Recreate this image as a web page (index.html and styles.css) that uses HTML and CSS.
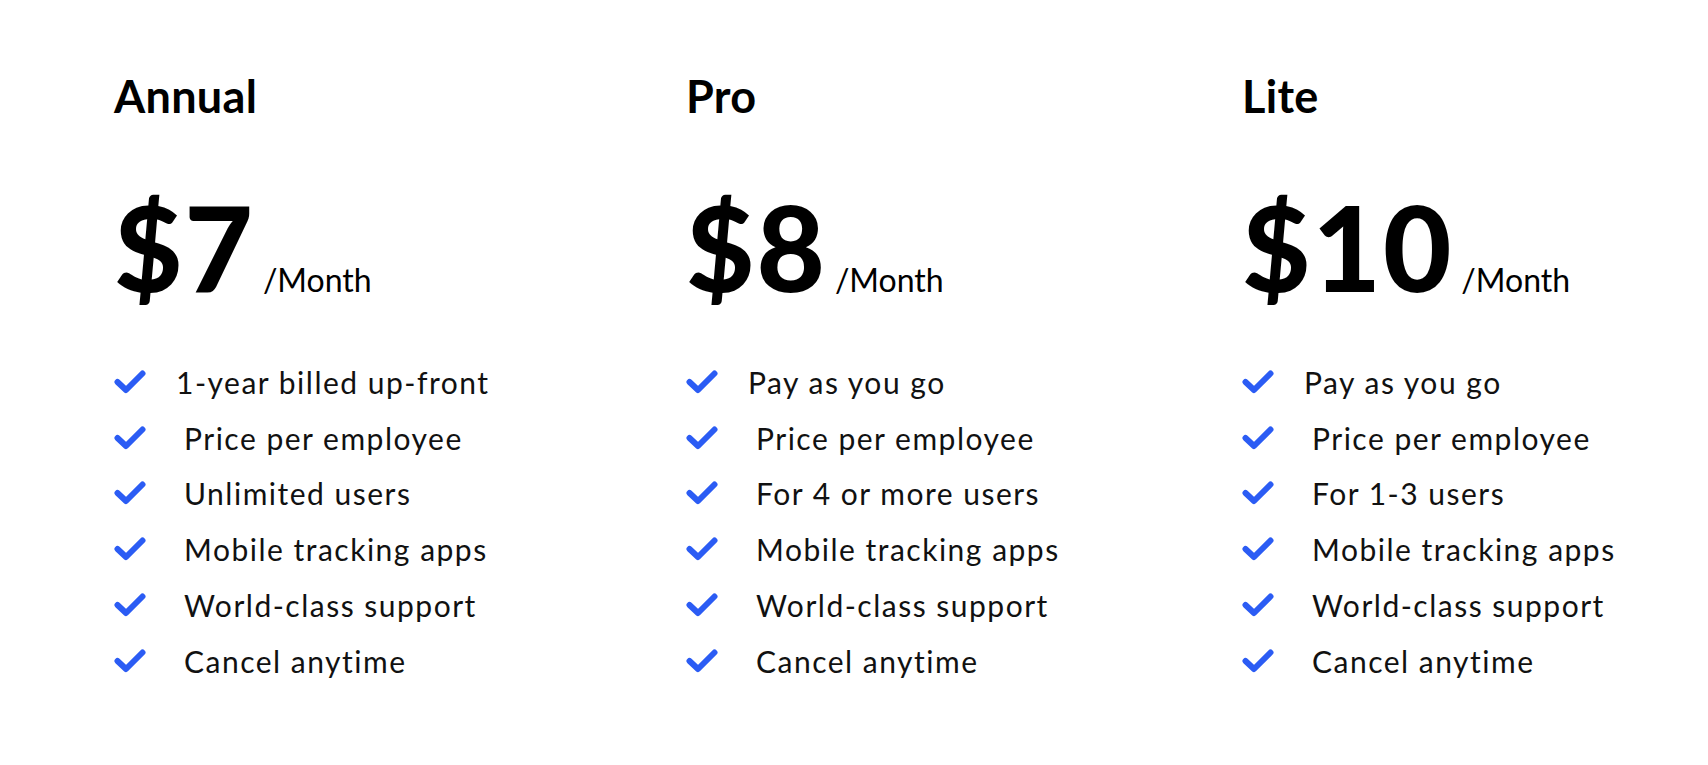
FILE: index.html
```html
<!DOCTYPE html>
<html lang="en">
<head>
<meta charset="utf-8">
<title>Pricing</title>
<link rel="stylesheet" href="styles.css">
</head>
<body>
<main class="plans">
  <section class="plan">
    <h2 class="plan-name">Annual</h2>
    <div class="plan-price"><span class="amount">$7</span><span class="period">/Month</span></div>
    <ul class="features">
      <li class="feature feature-lead"><svg class="check" viewBox="0 0 32 24"><polyline points="3.5,12 12,20 28.5,3.5"/></svg><span>1-year billed up-front</span></li>
      <li class="feature"><svg class="check" viewBox="0 0 32 24"><polyline points="3.5,12 12,20 28.5,3.5"/></svg><span>Price per employee</span></li>
      <li class="feature"><svg class="check" viewBox="0 0 32 24"><polyline points="3.5,12 12,20 28.5,3.5"/></svg><span>Unlimited users</span></li>
      <li class="feature"><svg class="check" viewBox="0 0 32 24"><polyline points="3.5,12 12,20 28.5,3.5"/></svg><span>Mobile tracking apps</span></li>
      <li class="feature"><svg class="check" viewBox="0 0 32 24"><polyline points="3.5,12 12,20 28.5,3.5"/></svg><span>World-class support</span></li>
      <li class="feature"><svg class="check" viewBox="0 0 32 24"><polyline points="3.5,12 12,20 28.5,3.5"/></svg><span>Cancel anytime</span></li>
    </ul>
  </section>
  <section class="plan">
    <h2 class="plan-name">Pro</h2>
    <div class="plan-price"><span class="amount">$8</span><span class="period">/Month</span></div>
    <ul class="features">
      <li class="feature feature-lead"><svg class="check" viewBox="0 0 32 24"><polyline points="3.5,12 12,20 28.5,3.5"/></svg><span>Pay as you go</span></li>
      <li class="feature"><svg class="check" viewBox="0 0 32 24"><polyline points="3.5,12 12,20 28.5,3.5"/></svg><span>Price per employee</span></li>
      <li class="feature"><svg class="check" viewBox="0 0 32 24"><polyline points="3.5,12 12,20 28.5,3.5"/></svg><span>For 4 or more users</span></li>
      <li class="feature"><svg class="check" viewBox="0 0 32 24"><polyline points="3.5,12 12,20 28.5,3.5"/></svg><span>Mobile tracking apps</span></li>
      <li class="feature"><svg class="check" viewBox="0 0 32 24"><polyline points="3.5,12 12,20 28.5,3.5"/></svg><span>World-class support</span></li>
      <li class="feature"><svg class="check" viewBox="0 0 32 24"><polyline points="3.5,12 12,20 28.5,3.5"/></svg><span>Cancel anytime</span></li>
    </ul>
  </section>
  <section class="plan">
    <h2 class="plan-name">Lite</h2>
    <div class="plan-price"><span class="amount">$10</span><span class="period">/Month</span></div>
    <ul class="features">
      <li class="feature feature-lead"><svg class="check" viewBox="0 0 32 24"><polyline points="3.5,12 12,20 28.5,3.5"/></svg><span>Pay as you go</span></li>
      <li class="feature"><svg class="check" viewBox="0 0 32 24"><polyline points="3.5,12 12,20 28.5,3.5"/></svg><span>Price per employee</span></li>
      <li class="feature"><svg class="check" viewBox="0 0 32 24"><polyline points="3.5,12 12,20 28.5,3.5"/></svg><span>For 1-3 users</span></li>
      <li class="feature"><svg class="check" viewBox="0 0 32 24"><polyline points="3.5,12 12,20 28.5,3.5"/></svg><span>Mobile tracking apps</span></li>
      <li class="feature"><svg class="check" viewBox="0 0 32 24"><polyline points="3.5,12 12,20 28.5,3.5"/></svg><span>World-class support</span></li>
      <li class="feature"><svg class="check" viewBox="0 0 32 24"><polyline points="3.5,12 12,20 28.5,3.5"/></svg><span>Cancel anytime</span></li>
    </ul>
  </section>
</main>
</body>
</html>
```
FILE: styles.css
```css
* {
  box-sizing: border-box;
}

html, body {
  margin: 0;
  padding: 0;
  background: #ffffff;
}

body {
  font-family: "Lato", "Liberation Sans", sans-serif;
  color: #000000;
}

.plans {
  display: grid;
  grid-template-columns: 572px 556px 1fr;
  padding: 69px 0 0 114px;
}

.plan {
  display: flex;
  flex-direction: column;
}

.plan-name {
  margin: 0;
  font-size: 45px;
  line-height: 54px;
  font-weight: 700;
  letter-spacing: 0.3px;
}

.plan-price {
  display: flex;
  align-items: baseline;
  margin-top: 53px;
}

.amount {
  font-size: 118px;
  line-height: 142px;
  font-weight: 900;
  letter-spacing: 2px;
}

.period {
  margin-left: 8px;
  font-size: 32px;
  line-height: 1;
  font-weight: 400;
}

.features {
  list-style: none;
  margin: 36px 0 0;
  padding: 0;
}

.feature {
  display: flex;
  align-items: center;
  height: 55.75px;
  font-size: 30px;
  color: #111111;
  letter-spacing: 1.5px;
}

.check {
  flex: none;
  width: 32px;
  height: 24px;
  margin-right: 38px;
  fill: none;
  stroke: #2b5cf4;
  stroke-width: 6;
  stroke-linecap: round;
  stroke-linejoin: round;
}

.feature-lead .check {
  margin-right: 30px;
}
```
